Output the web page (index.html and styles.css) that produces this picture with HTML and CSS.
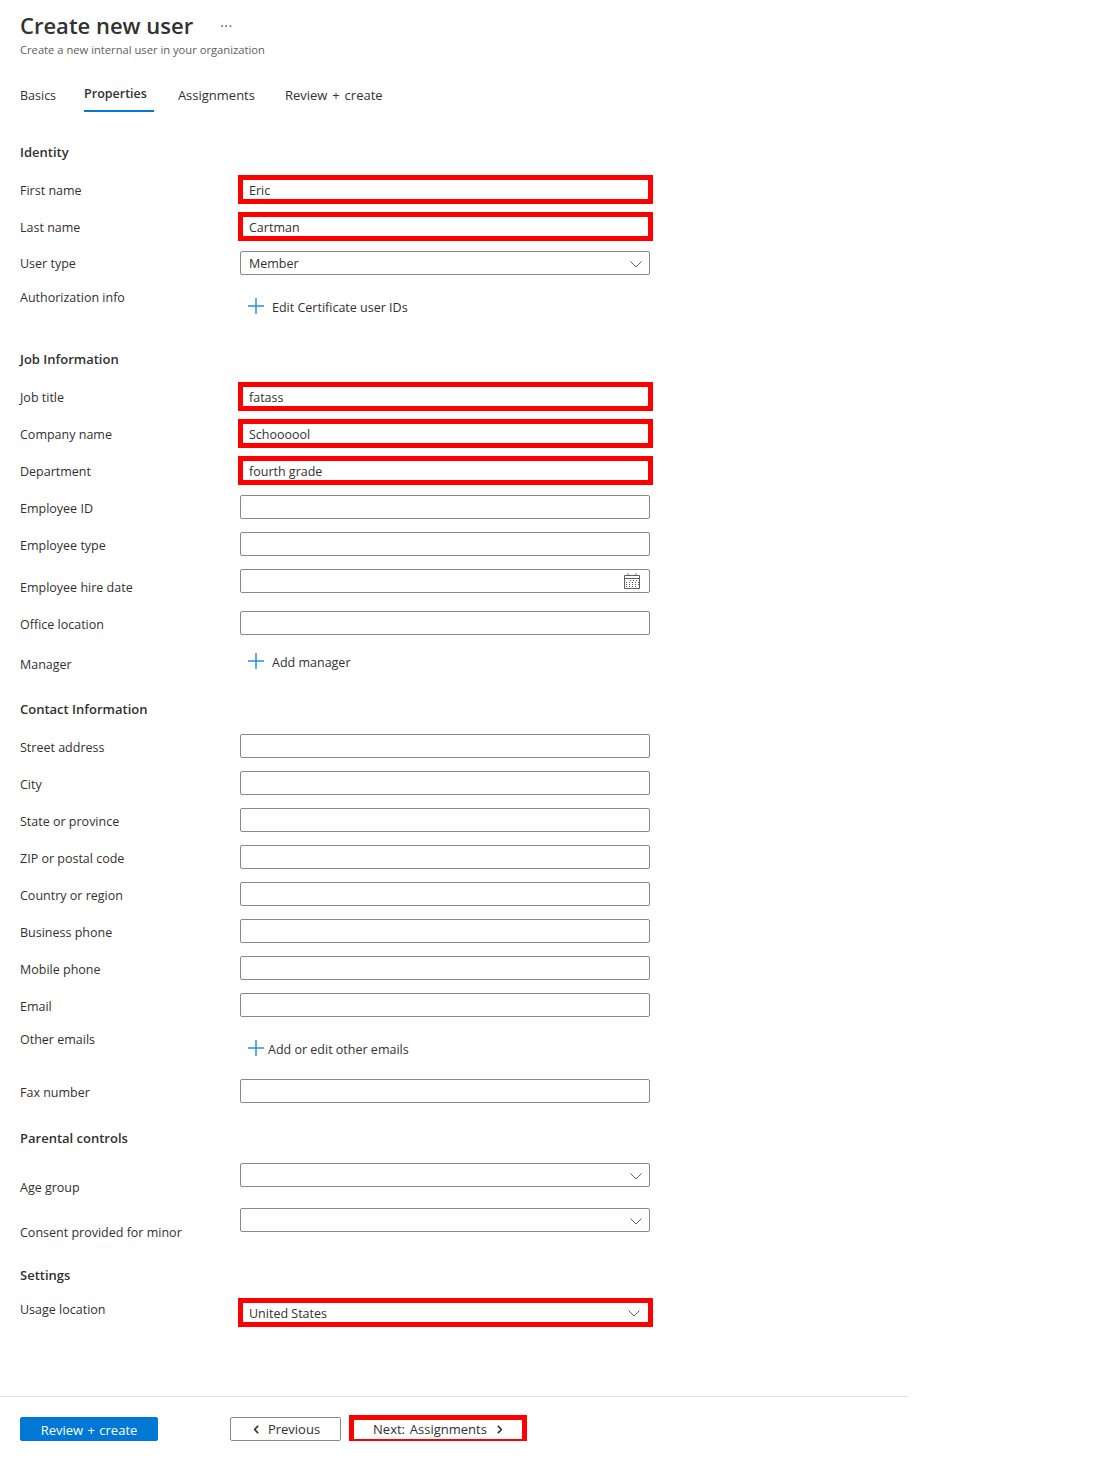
FILE: index.html
```html
<!DOCTYPE html>
<html lang="en">
<head>
    <meta charset="UTF-8">
    <title>Create new user</title>
    <link rel="stylesheet" href="styles.css">
</head>
<body>
    <svg class="sprites" width="0" height="0">
        <symbol id="plus" viewBox="0 0 16 16"><path d="M0 8h16M8 0v16"/></symbol>
        <symbol id="chevron" viewBox="0 0 12 7"><path d="M.5.5 6 6 11.500.5"/></symbol>
    </svg>

    <header class="page-head">
        <div class="title-line">
            <h1>Create new user</h1>
            <span class="more">···</span>
        </div>
        <p class="subtitle">Create a new internal user in your organization</p>
    </header>

    <nav class="tabs">
        <a class="tab">Basics</a>
        <a class="tab active">Properties</a>
        <a class="tab">Assignments</a>
        <a class="tab">Review + create</a>
    </nav>

    <form class="user-form">
        <h2 class="heading first">Identity</h2>
        <div class="row"><label>First name</label><div class="field marked">Eric</div></div>
        <div class="row"><label>Last name</label><div class="field marked">Cartman</div></div>
        <div class="row">
            <label class="flush">User type</label>
            <div class="field select">Member<svg class="chevron"><use href="#chevron"/></svg></div>
        </div>
        <div class="row auth-row">
            <label class="top">Authorization info</label>
            <a class="add-link"><svg class="plus"><use href="#plus"/></svg>Edit Certificate user IDs</a>
        </div>

        <h2 class="heading after-auth">Job Information</h2>
        <div class="row"><label>Job title</label><div class="field marked">fatass</div></div>
        <div class="row"><label>Company name</label><div class="field marked">Schoooool</div></div>
        <div class="row"><label>Department</label><div class="field marked">fourth grade</div></div>
        <div class="row"><label>Employee ID</label><div class="field"></div></div>
        <div class="row"><label>Employee type</label><div class="field"></div></div>
        <div class="row">
            <label class="low">Employee hire date</label>
            <div class="field date">
                <svg class="calendar" viewBox="0 0 16 16" width="16" height="16">
                    <path class="cal-line" d="M.5 2.500h15v13H.5zM.5 5.500h15M4 .5v2M12 .5v2"/>
                    <path class="cal-dots" d="M6 7.500h9M2 9.500h13M2 11.500h13M2 13.500h10"/>
                </svg>
            </div>
        </div>
        <div class="row"><label>Office location</label><div class="field"></div></div>
        <div class="row">
            <label class="manager">Manager</label>
            <a class="add-link manager-link"><svg class="plus"><use href="#plus"/></svg>Add manager</a>
        </div>

        <h2 class="heading after-manager">Contact Information</h2>
        <div class="row"><label>Street address</label><div class="field"></div></div>
        <div class="row"><label>City</label><div class="field"></div></div>
        <div class="row"><label>State or province</label><div class="field"></div></div>
        <div class="row"><label>ZIP or postal code</label><div class="field"></div></div>
        <div class="row"><label>Country or region</label><div class="field"></div></div>
        <div class="row"><label>Business phone</label><div class="field"></div></div>
        <div class="row"><label>Mobile phone</label><div class="field"></div></div>
        <div class="row"><label>Email</label><div class="field"></div></div>
        <div class="row emails-row">
            <label class="top">Other emails</label>
            <a class="add-link emails-link"><svg class="plus"><use href="#plus"/></svg>Add or edit other emails</a>
        </div>
        <div class="row"><label>Fax number</label><div class="field"></div></div>

        <h2 class="heading after-fax">Parental controls</h2>
        <div class="row tall-row">
            <label class="lowest">Age group</label>
            <div class="field select"><svg class="chevron"><use href="#chevron"/></svg></div>
        </div>
        <div class="row tall-row">
            <label class="lowest">Consent provided for minor</label>
            <div class="field select"><svg class="chevron"><use href="#chevron"/></svg></div>
        </div>

        <h2 class="heading after-fax">Settings</h2>
        <div class="row">
            <label class="usage">Usage location</label>
            <div class="field select marked">United States<svg class="chevron shifted"><use href="#chevron"/></svg></div>
        </div>
    </form>

    <footer class="actions">
        <button type="button" class="btn primary">Review + create</button>
        <button type="button" class="btn previous">
            <svg class="arrow" viewBox="0 0 6 10"><path d="M5 .5.8 5 5 9.500"/></svg>Previous
        </button>
        <button type="button" class="btn next marked">
            Next: Assignments<svg class="arrow" viewBox="0 0 6 10"><path d="M1 .5 5.200 5 1 9.500"/></svg>
        </button>
    </footer>
</body>
</html>
```

FILE: styles.css
```css
body {
    margin: 0;
    font-family: 'Open Sans', 'Noto Sans', sans-serif;
    font-size: 12.500px;
    color: #323130;
    background-color: #fff;
}
.sprites {
    position: absolute;
}
.page-head {
    padding: 11px 0 0 20px;
}
.title-line {
    display: flex;
    align-items: center;
    height: 30px;
}
h1 {
    margin: 0 0 2px;
    font-size: 22px;
    font-weight: 600;
}
.more {
    margin: 0 0 2px 27px;
    font-size: 14px;
    letter-spacing: 0.5px;
    color: #605e5c;
}
.subtitle {
    margin: 1px 0 0;
    height: 16px;
    line-height: 16px;
    font-size: 11.200px;
    color: #605e5c;
}
.tabs {
    display: flex;
    margin-top: 26px;
    padding-left: 20px;
    height: 28px;
}
.tab {
    margin-right: 30px;
    line-height: 20px;
    padding-top: 1px;
    font-size: 13px;
    word-spacing: 1.500px;
}
.tab:first-child {
    margin-right: 28px;
    padding-top: 2px;
    font-size: 12.500px;
}
.tab.active {
    padding: 0 7px 0 0;
    margin-right: 24px;
    height: 26px;
    font-size: 12.500px;
    font-weight: 600;
    border-bottom: 2px solid #0078d4;
}
.user-form {
    padding-left: 20px;
}
.heading {
    margin: 0 0 15px;
    height: 20px;
    line-height: 20px;
    font-size: 13px;
    font-weight: 600;
}
.heading.first {
    margin-top: 30px;
}
.heading.after-auth {
    margin-top: 30px;
}
.heading.after-manager {
    margin-top: 24px;
}
.heading.after-fax {
    margin-top: 25px;
}
.row {
    display: grid;
    grid-template-columns: 220px 410px;
    align-items: start;
    margin-bottom: 13px;
    min-height: 24px;
}
label {
    display: block;
    line-height: 20px;
    padding-top: 4px;
}
label.flush {
    padding-top: 3px;
}
label.top {
    padding-top: 0;
}
label.low {
    padding-top: 9px;
}
label.manager {
    padding-top: 7px;
}
label.lowest {
    padding-top: 15px;
}
label.usage {
    padding-top: 0;
}
.field {
    position: relative;
    box-sizing: border-box;
    height: 24px;
    line-height: 22px;
    padding: 1px 0 0 8px;
    border: 1px solid #8a8886;
    border-radius: 2px;
    background-color: #fff;
}
.field.marked {
    padding-top: 2px;
}
.marked::after {
    content: "";
    position: absolute;
    top: -3px;
    left: -3px;
    right: -4px;
    bottom: -4px;
    border: 5px solid #f00;
}
.chevron {
    position: absolute;
    top: 9px;
    right: 7px;
    width: 12px;
    height: 7px;
    fill: none;
    stroke: #605e5c;
}
.chevron.shifted {
    right: 9px;
}
.calendar {
    position: absolute;
    top: 3px;
    right: 9px;
}
.cal-line {
    fill: none;
    stroke: #605e5c;
}
.cal-dots {
    fill: none;
    stroke: #605e5c;
    stroke-dasharray: 1 2;
}
.add-link {
    display: flex;
    align-items: center;
    height: 20px;
    margin-left: 8px;
}
.plus {
    width: 16px;
    height: 16px;
    margin: -2px 8px 0 0;
    fill: none;
    stroke: #2b8fdb;
    stroke-width: 1.500;
}
.auth-row {
    height: 31px;
}
.auth-row .add-link {
    margin-top: 9px;
}
.manager-link {
    margin-top: 4px;
}
.emails-row {
    height: 36px;
}
.emails-link {
    margin-top: 9px;
}
.emails-link .plus {
    margin-right: 4px;
}
.tall-row {
    height: 32px;
}
.actions {
    display: flex;
    margin-top: 72px;
    width: 869px;
    padding: 20px 20px 0;
    border-top: 1px solid #e1dfdd;
}
.btn {
    position: relative;
    box-sizing: border-box;
    height: 24px;
    padding: 0;
    font: inherit;
    font-size: 13px;
    color: #323130;
    background-color: #fff;
    border: 1px solid #8a8886;
    border-radius: 2px;
}
.primary {
    width: 138px;
    padding-top: 2px;
    word-spacing: 1px;
    color: #fff;
    background-color: #0078d4;
    border-color: #0078d4;
}
.previous {
    width: 111px;
    margin-left: 72px;
    padding-left: 3px;
}
.next {
    width: 173px;
    margin-left: 10px;
    word-spacing: 1.500px;
    border-color: #fff;
}
.arrow {
    width: 5px;
    height: 9px;
    fill: none;
    stroke: #323130;
    stroke-width: 2;
}
.previous .arrow {
    margin-right: 9px;
}
.next .arrow {
    margin-left: 10px;
}
```
